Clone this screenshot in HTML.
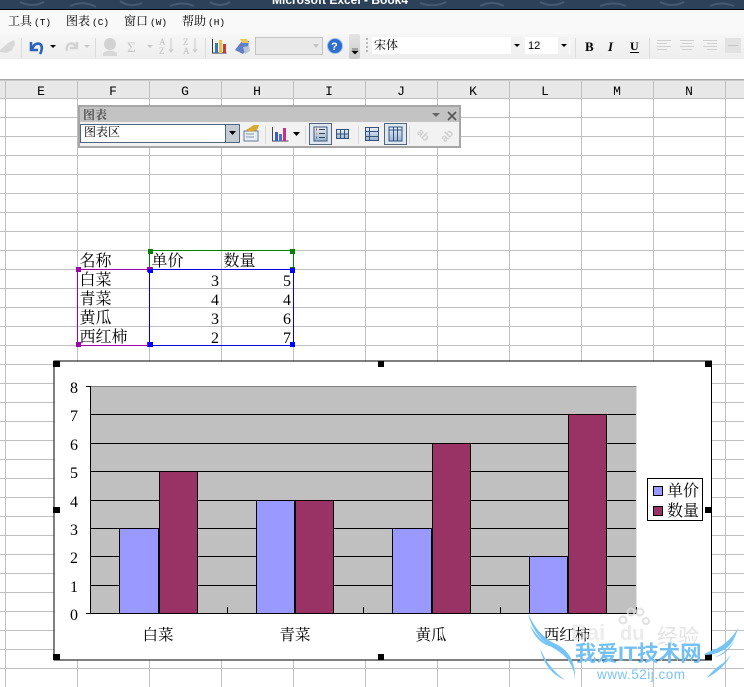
<!DOCTYPE html>
<html><head><meta charset="utf-8"><style>
html,body{margin:0;padding:0;background:#fff;width:744px;height:687px;overflow:hidden}
svg{display:block}
text{font-family:"Liberation Mono","Noto Serif CJK SC",serif;fill:#000}
.c{font-family:"Liberation Serif","Noto Serif CJK SC",serif;font-size:16px}
.m{font-family:"Liberation Sans","Noto Serif CJK SC",serif;font-size:12px}
.p{font-family:"Liberation Mono",monospace;font-size:9.5px}
.h{font-family:"Liberation Mono",monospace;font-size:13px;text-anchor:middle}
.n{font-family:"Liberation Serif",serif;font-size:16px;text-anchor:end}
.a{font-family:"Liberation Serif",serif;font-size:16px;text-anchor:middle}
.x{font-family:"Liberation Sans","Noto Serif CJK SC",serif;font-size:15.500px;text-anchor:middle}
</style></head><body>
<svg width="744" height="687" viewBox="0 0 744 687" xmlns="http://www.w3.org/2000/svg">
<defs>
<linearGradient id="tb" x1="0" y1="0" x2="0" y2="1"><stop offset="0" stop-color="#f6f6f6"/><stop offset="1" stop-color="#eeeeee"/></linearGradient>
<linearGradient id="ic" x1="0" y1="0" x2="0" y2="1"><stop offset="0" stop-color="#e8eef6"/><stop offset="1" stop-color="#9db4cf"/></linearGradient>
<linearGradient id="hd" x1="0" y1="0" x2="0" y2="1"><stop offset="0" stop-color="#e4e4e4"/><stop offset="1" stop-color="#cccccc"/></linearGradient>
</defs>
<!-- title strip -->
<rect width="744" height="9" fill="#2d4159"/>
<path d="M20 2q12 6 24 0M70 6q14-6 26 1M120 1q10 7 22 2M170 6q12-5 24 0M210 2q10 6 20 0M420 3q14 5 26-1M480 6q12-6 24 0M540 2q12 6 24 0M600 6q14-5 26 0M660 2q12 6 24 0M710 6q12-5 24 0" stroke="#465b73" stroke-width="2" fill="none"/>
<text x="272" y="4" style="font-family:'Liberation Sans',sans-serif;font-size:12px;font-weight:bold;fill:#fff">Microsoft Excel - Book4</text>
<rect y="9" width="744" height="1" fill="#000"/>
<!-- menu -->
<rect y="10" width="744" height="24" fill="#f9f9f9"/>
<text class="m" x="8" y="25">工具</text><text class="p" x="34" y="25">(T)</text>
<text class="m" x="66" y="25">图表</text><text class="p" x="92" y="25">(C)</text>
<text class="m" x="124" y="25">窗口</text><text class="p" x="150" y="25">(W)</text>
<text class="m" x="182" y="25">帮助</text><text class="p" x="208" y="25">(H)</text>
<!-- toolbar -->
<rect y="34" width="744" height="25" fill="url(#tb)"/>
<path d="M0 50l8-7 6-3 1 4-3 6-5 3-7-1z" fill="#d8d8d8"/>
<path d="M21.500 38v20M95.500 38v20M205.500 38v20M575.500 38v20M649.500 38v20" stroke="#dcdcdc"/>
<path d="M31 42v8h7M32 49q3-7 8-5 3 2 1 8l-1 2" stroke="#2a62c0" stroke-width="2.600" fill="none"/>
<path d="M50 45h6l-3 3z" fill="#000"/>
<path d="M77 42v6h-7M76 47q-2-5-7-3-3 2-2 7" stroke="#d2d2d2" stroke-width="2.400" fill="none"/>
<path d="M84 45h6l-3 3z" fill="#c8c8c8"/>
<circle cx="110" cy="44" r="6" fill="#d2d2d2"/><path d="M103 53q7-5 14 0v3h-14z" fill="#d8d8d8"/>
<text x="127" y="52" style="font-family:'Liberation Serif',serif;font-size:15px;fill:#c8c8c8">Σ</text>
<path d="M147 45h6l-3 3z" fill="#c8c8c8"/>
<text x="159" y="45" style="font-family:'Liberation Serif',serif;font-size:9px;fill:#c0c0c0">A</text><text x="159" y="54" style="font-family:'Liberation Serif',serif;font-size:9px;fill:#c0c0c0">Z</text>
<path d="M171 38v13M169 49l2 3 2-3" stroke="#c8c8c8" fill="none"/>
<text x="183" y="45" style="font-family:'Liberation Serif',serif;font-size:9px;fill:#c0c0c0">Z</text><text x="183" y="54" style="font-family:'Liberation Serif',serif;font-size:9px;fill:#c0c0c0">A</text>
<path d="M195 38v13M193 49l2 3 2-3" stroke="#c8c8c8" fill="none"/>
<path d="M212.500 39v14h14" stroke="#334" fill="none"/>
<rect x="215" y="43" width="3" height="10" fill="#3477c9"/><rect x="219" y="40" width="3" height="13" fill="#e8c040"/><rect x="223" y="44" width="3" height="9" fill="#c83a3a"/>
<path d="M235 50l7-9h7l-1 7-5 6z" fill="#5f7fc8"/><path d="M240 39h7l2 4h-7z" fill="#e6c860"/><path d="M243 47l6-1 1 5-5 3z" fill="#b9c4d2"/>
<rect x="255.500" y="37.500" width="67" height="17" fill="#e9e9e9" stroke="#c4c4c4"/><path d="M313 44h6l-3 4z" fill="#c4c4c4"/>
<circle cx="335" cy="46" r="7.500" fill="#2f6ccf" stroke="#9cc0ee"/><text x="331" y="50" style="font-family:'Liberation Sans',sans-serif;font-size:11px;font-weight:bold;fill:#fff">?</text>
<rect x="349" y="34" width="11" height="25" rx="2" fill="url(#hd)"/><path d="M352 49h6M352 51h6l-3 3z" stroke="#000" fill="#000" stroke-width=".6"/>
<path d="M367 38v2M367 42v2M367 46v2M367 50v2" stroke="#b8b8b8" stroke-width="2"/>
<rect x="372" y="37" width="150" height="17" fill="#fff"/><rect x="511" y="37" width="11" height="17" fill="#f1f1f1"/><path d="M514 44h6l-3 3z" fill="#000"/>
<text class="m" x="374" y="49" style="font-size:12px">宋体</text>
<rect x="525" y="37" width="45" height="17" fill="#fff"/><rect x="558" y="37" width="11" height="17" fill="#f1f1f1"/><path d="M561 44h6l-3 3z" fill="#000"/>
<text x="528" y="49" style="font-family:'Liberation Sans',sans-serif;font-size:11px">12</text>
<text x="585" y="51" style="font-family:'Liberation Serif',serif;font-size:13px;font-weight:bold">B</text>
<text x="608" y="51" style="font-family:'Liberation Serif',serif;font-size:13px;font-weight:bold;font-style:italic">I</text>
<text x="630" y="50" style="font-family:'Liberation Serif',serif;font-size:12px;font-weight:bold">U</text><path d="M630 52.500h9" stroke="#000"/>
<path d="M657 40.500h14M657 43.500h10M657 46.500h14M657 49.500h10M680 40.500h14M682 43.500h10M680 46.500h14M682 49.500h10M703 40.500h14M707 43.500h10M703 46.500h14M707 49.500h10" stroke="#cfcfcf"/>
<rect x="725" y="38" width="16" height="15" fill="#e2e2e2"/><path d="M728 45.500h10" stroke="#c4c4c4"/>
<!-- grid -->
<path d="M5.500 98V687M77.500 98V687M149.500 98V687M221.500 98V687M293.500 98V687M365.500 98V687M437.500 98V687M509.500 98V687M581.500 98V687M653.500 98V687M725.500 98V687M0 98.500H744M0 117.500H744M0 136.500H744M0 155.500H744M0 174.500H744M0 193.500H744M0 212.500H744M0 231.500H744M0 250.500H744M0 269.500H744M0 288.500H744M0 307.500H744M0 326.500H744M0 345.500H744M0 364.500H744M0 383.500H744M0 402.500H744M0 421.500H744M0 440.500H744M0 459.500H744M0 478.500H744M0 497.500H744M0 516.500H744M0 535.500H744M0 554.500H744M0 573.500H744M0 592.500H744M0 611.500H744M0 630.500H744M0 649.500H744M0 668.500H744" stroke="#c0c0c0"/>
<!-- col header -->
<rect y="79" width="744" height="19" fill="#e8e8e8"/><rect y="79" width="744" height="1.500" fill="#a8a8a8"/>
<path d="M5.500 80V98M77.500 80V98M149.500 80V98M221.500 80V98M293.500 80V98M365.500 80V98M437.500 80V98M509.500 80V98M581.500 80V98M653.500 80V98M725.500 80V98" stroke="#c0c0c0"/>
<text class="h" x="41" y="95">E</text><text class="h" x="113" y="95">F</text><text class="h" x="185" y="95">G</text><text class="h" x="257" y="95">H</text><text class="h" x="329" y="95">I</text><text class="h" x="401" y="95">J</text><text class="h" x="473" y="95">K</text><text class="h" x="545" y="95">L</text><text class="h" x="617" y="95">M</text><text class="h" x="689" y="95">N</text>
<!-- chart toolbar -->
<rect x="78" y="105" width="383" height="43" fill="#a6a6a6"/>
<rect x="80" y="107" width="379" height="15" fill="#c3c3c3"/>
<rect x="80" y="122" width="379" height="24" fill="#f2f2f2"/>
<text class="m" x="83" y="119" style="font-weight:bold;fill:#555">图表</text>
<path d="M432 113h8l-4 4z" fill="#666"/><path d="M448 112l8 8m0-8l-8 8" stroke="#555" stroke-width="1.600"/>
<rect x="80.500" y="124.500" width="159" height="18" fill="#fff" stroke="#54667c"/>
<rect x="225.500" y="124.500" width="14" height="18" fill="#c6ccd3" stroke="#54667c"/><path d="M229 131h7l-3.500 4z" fill="#000"/>
<text class="m" x="84" y="136" style="font-size:12px">图表区</text>
<rect x="244" y="131" width="14" height="10" fill="#e8eef6" stroke="#6a7b92"/><path d="M246 134h8M246 137h8" stroke="#8898ac"/><path d="M246 130l8-5 5 0-2 5-6 2z" fill="#d8a830"/>
<path d="M265.500 126v18M305.500 126v18M358.500 126v18M409.500 126v18" stroke="#d8d8d8"/>
<path d="M272.500 127v14h16" stroke="#445" fill="none"/>
<rect x="275" y="132" width="3" height="9" fill="#3a5fc0"/><rect x="279" y="134" width="3" height="7" fill="#4a70d0"/><rect x="283" y="128" width="3" height="13" fill="#c83080"/>
<path d="M293 132h7l-3.500 4z" fill="#000"/>
<rect x="309.500" y="123.500" width="22" height="21" fill="#dfe7f0" stroke="#54667c"/>
<rect x="314" y="127" width="13" height="14" fill="url(#ic)" stroke="#3d587c"/><path d="M316 129.500h1" stroke="#c33" stroke-width="2"/><path d="M316 133.500h1" stroke="#d8a020" stroke-width="2"/><path d="M316 137.500h1" stroke="#38a" stroke-width="2"/><path d="M319 129.500h6M319 133.500h6M319 137.500h6" stroke="#345"/>
<rect x="336.500" y="129.500" width="12" height="9" fill="url(#ic)" stroke="#35557f"/><path d="M340.500 130v8M344.500 130v8M337 134h11" stroke="#35557f"/>
<rect x="365.500" y="127.500" width="13" height="13" fill="url(#ic)" stroke="#35557f"/><path d="M366 131.500h12M366 136.500h12M369.500 128v12" stroke="#35557f"/>
<rect x="384.500" y="123.500" width="22" height="21" fill="#dfe7f0" stroke="#54667c"/>
<rect x="389" y="127" width="13" height="14" fill="url(#ic)" stroke="#35557f"/><path d="M389 130h13M393.500 127v14M397.500 127v14" stroke="#35557f"/>
<text x="417" y="139" transform="rotate(45 424 135)" style="font-family:'Liberation Sans',sans-serif;font-size:11px;font-weight:bold;fill:#d0d0d0">ab</text>
<text x="440" y="139" transform="rotate(-45 447 135)" style="font-family:'Liberation Sans',sans-serif;font-size:11px;font-weight:bold;fill:#d0d0d0">ab</text>
<!-- cells -->
<text class="c" x="79.500" y="266">名称</text><text class="c" x="151.500" y="266">单价</text><text class="c" x="223.500" y="266">数量</text>
<text class="c" x="79.500" y="285">白菜</text><text class="c" x="79.500" y="304">青菜</text><text class="c" x="79.500" y="323">黄瓜</text><text class="c" x="79.500" y="342">西红柿</text>
<text class="n" x="219" y="286">3</text><text class="n" x="291" y="286">5</text>
<text class="n" x="219" y="305">4</text><text class="n" x="291" y="305">4</text>
<text class="n" x="219" y="324">3</text><text class="n" x="291" y="324">6</text>
<text class="n" x="219" y="343">2</text><text class="n" x="291" y="343">7</text>
<!-- selections -->
<rect x="77.500" y="269.500" width="72" height="76" fill="none" stroke="#a000b0"/>
<rect x="149.500" y="250.500" width="144" height="19" fill="none" stroke="#008000"/>
<rect x="149.500" y="269.500" width="144" height="76" fill="none" stroke="#0000e0"/>
<path d="M148 249h5v5h-5zM290 249h5v5h-5zM148 267h5v2h-5zM290 267h5v2h-5z" fill="#008000"/>
<path d="M76 267h5v5h-5zM76 342h5v5h-5zM147 267h5v5h-5zM147 342h5v5h-5z" fill="#a000b0"/>
<path d="M148 269h5v4h-5zM290 268h5v5h-5zM148 342h5v5h-5zM290 342h5v5h-5z" fill="#0000ff"/>
<!-- chart -->
<rect x="54" y="361" width="657.500" height="299" fill="#fff" stroke="#000"/>
<rect x="90.500" y="386.500" width="546" height="227" fill="#c0c0c0"/>
<path d="M90.500 386.500H636.500" stroke="#808080"/>
<path d="M90 414.500H636M90 443.500H636M90 471.500H636M90 500.500H636M90 528.500H636M90 556.500H636M90 585.500H636M90.500 386V614M86 613.500H637M86 386.500H91" stroke="#000"/>
<path d="M227.500 607v7M363.500 607v7M500.500 607v7M636.500 607v7" stroke="#000"/>
<rect x="119.500" y="528.500" width="39" height="85" fill="#9999ff" stroke="#000"/><rect x="159.500" y="471.500" width="38" height="142" fill="#993366" stroke="#000"/>
<rect x="256.500" y="500.500" width="38" height="113" fill="#9999ff" stroke="#000"/><rect x="295.500" y="500.500" width="38" height="113" fill="#993366" stroke="#000"/>
<rect x="392.500" y="528.500" width="39" height="85" fill="#9999ff" stroke="#000"/><rect x="432.500" y="443.500" width="38" height="170" fill="#993366" stroke="#000"/>
<rect x="529.500" y="556.500" width="38" height="57" fill="#9999ff" stroke="#000"/><rect x="568.500" y="414.500" width="38" height="199" fill="#993366" stroke="#000"/>
<text class="a" x="74" y="393">8</text><text class="a" x="74" y="421">7</text><text class="a" x="74" y="450">6</text><text class="a" x="74" y="478">5</text><text class="a" x="74" y="507">4</text><text class="a" x="74" y="535">3</text><text class="a" x="74" y="563">2</text><text class="a" x="74" y="592">1</text><text class="a" x="74" y="620">0</text>
<text class="x" x="158" y="640">白菜</text><text class="x" x="295" y="640">青菜</text><text class="x" x="431" y="640">黄瓜</text><text class="x" x="567" y="640">西红柿</text>
<rect x="647.500" y="478.500" width="55" height="42" fill="#fff" stroke="#000"/>
<rect x="653.500" y="486.500" width="9" height="9" fill="#9999ff" stroke="#000"/><rect x="653.500" y="506.500" width="9" height="9" fill="#993366" stroke="#000"/>
<text class="c" x="667" y="496">单价</text><text class="c" x="667" y="516">数量</text>
<path d="M53 361h7v6h-7zM378 361h6v6h-6zM705 361h7v6h-7zM53 507h7v6h-7zM705 507h7v6h-7zM53 654h7v6h-7zM378 654h6v6h-6zM705 654h7v6h-7z" fill="#000"/>
<!-- watermark -->
<g fill="none" stroke="#dcdcdc" stroke-width="2" opacity=".8">
<circle cx="623" cy="620" r="3.500"/><circle cx="631" cy="612" r="3.500"/><circle cx="640" cy="612" r="3.500"/><circle cx="646" cy="621" r="3"/>
</g>
<text x="571" y="640" style="font-family:'Liberation Sans',sans-serif;font-size:22px;font-weight:bold;fill:#dcdcdc;fill-opacity:.55">Bai</text>
<text x="620" y="640" style="font-family:'Liberation Sans',sans-serif;font-size:20px;font-weight:bold;fill:#e2e2e2;fill-opacity:.7">du</text>
<text x="657" y="644" style="font-family:'Liberation Sans','Noto Sans CJK SC',sans-serif;font-size:21px;fill:#dcdcdc;fill-opacity:.8">经验</text>
<text x="575" y="661" style="font-family:'Liberation Sans','Noto Sans CJK SC',sans-serif;font-size:21.500px;font-weight:bold;fill:#74c0f4">我爱IT技术网</text>
<text x="597" y="679" style="font-family:'Liberation Sans',sans-serif;font-size:13.500px;fill:#7cc4f5;letter-spacing:.5px">www.52ij.com</text>
<path d="M528 613q10 24 30 32 18 10 17 35 -1-20-20-31-22-12-27-36zM540 648q8 20 25 32 -20-8-25-32zM530 625q8 14 22 22-16-4-22-22z" fill="#74c4f7"/>
<path d="M738 628q-8 14-22 21-12 4-12 6 14 0 24-8 7-7 10-19zM731 654q-6 14-24 24 4-6 12-12 8-5 12-12zM735 640q-8 12-20 17 12-2 20-17z" fill="#74c4f7"/>
</svg>
</body></html>
